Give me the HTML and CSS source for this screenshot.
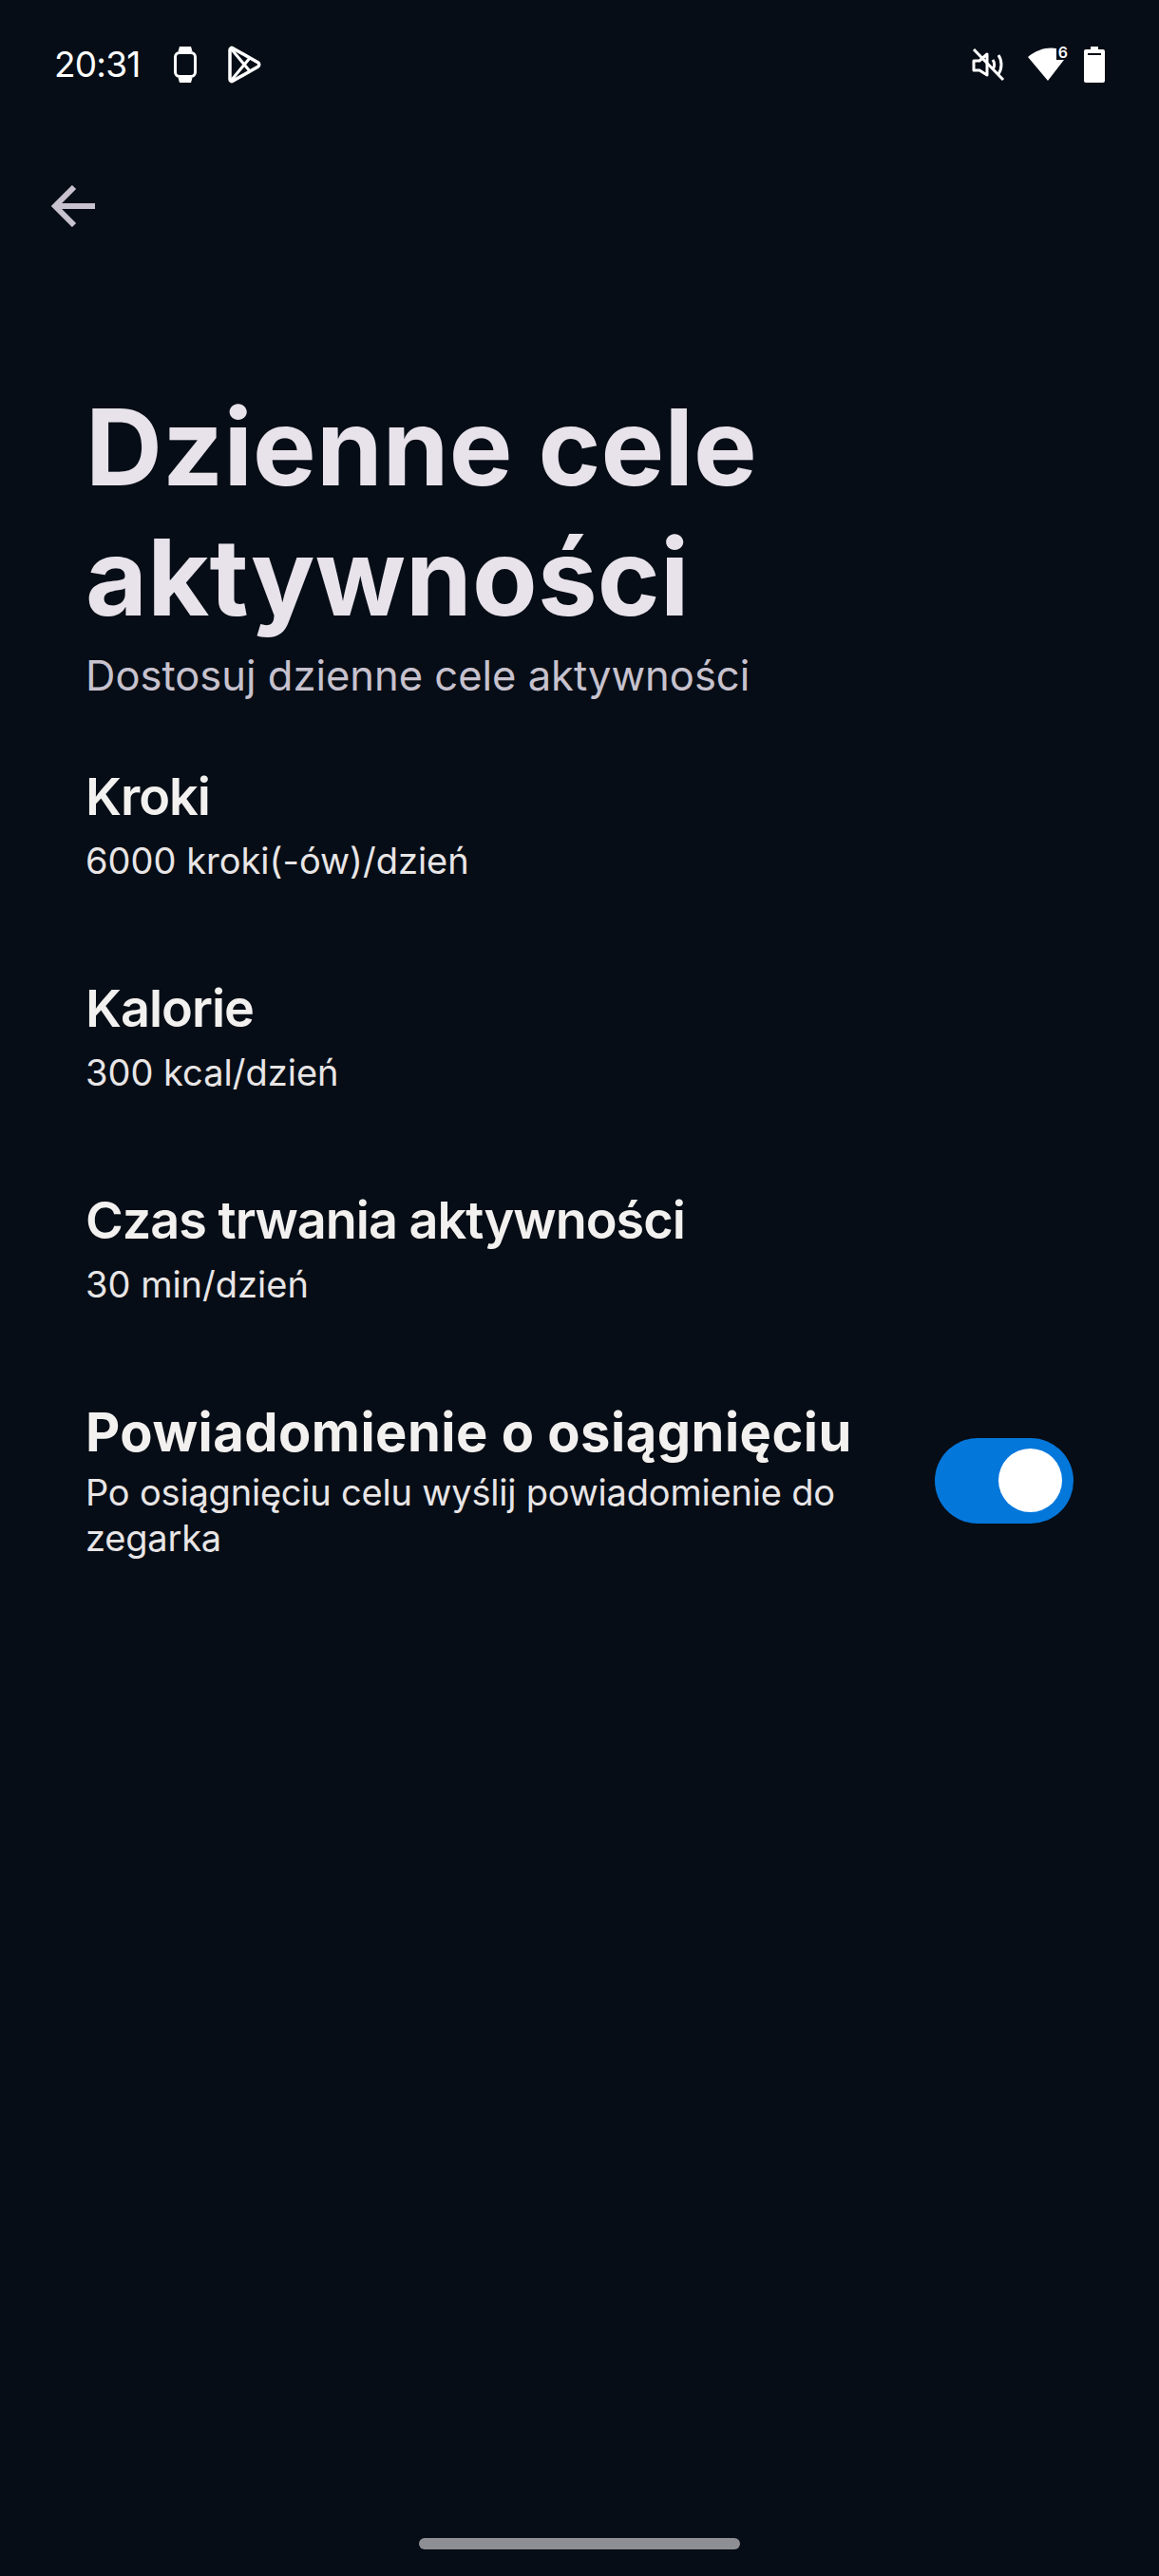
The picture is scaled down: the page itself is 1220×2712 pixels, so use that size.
FILE: index.html
```html
<!DOCTYPE html>
<html lang="pl">
<head>
    <meta charset="UTF-8">
    <meta name="viewport" content="width=device-width, initial-scale=1.0">
    <title>Dzienne cele aktywności</title>
    <link rel="stylesheet" href="styles.css">
</head>
<body>
    <div class="screen">
        <!-- Status bar -->
        <div class="status-bar">
            <div class="status-left">
                <span class="clock">20:31</span>
                <svg class="icon-watch" width="24" height="40" viewBox="0 0 24 40">
                    <path d="M6 1h12l1.500 5h-15z" fill="#fff"/>
                    <path d="M6 39h12l1.500-5h-15z" fill="#fff"/>
                    <rect x="1.500" y="7.500" width="21" height="25" rx="4.500" fill="none" stroke="#fff" stroke-width="3"/>
                </svg>
                <svg class="icon-play" width="36" height="40" viewBox="0 0 36 40">
                    <path d="M3 4.500C3 2.800 4.600 1.900 6 2.700L32.500 17.800C34.200 18.800 34.200 21.200 32.500 22.200L6 37.300C4.600 38.100 3 37.200 3 35.500Z" fill="none" stroke="#fff" stroke-width="3.500" stroke-linejoin="round"/>
                    <path d="M4 3L24 27M4 37L24 13" fill="none" stroke="#fff" stroke-width="3"/>
                </svg>
            </div>
            <div class="status-right">
                <svg class="icon-mute" width="38" height="34" viewBox="0 0 38 34">
                    <path d="M2 13h6l8-7v22l-8-5H2z" fill="none" stroke="#fff" stroke-width="3" stroke-linejoin="round"/>
                    <path d="M22 12c2 3 2 7 0 10M28 7c4 6 4 14 0 20" fill="none" stroke="#fff" stroke-width="3"/>
                    <path d="M2 1l31 32" fill="none" stroke="#fff" stroke-width="3"/>
                </svg>
                <div class="wifi-wrap">
                    <svg width="42" height="38" viewBox="0 0 42 38">
                        <path d="M0 11C9 3 21 0 30 2L30 14L38 14L21 36Z" fill="#fff"/>
                    </svg>
                    <span class="wifi-six">6</span>
                </div>
                <svg class="icon-battery" width="22" height="38" viewBox="0 0 22 38">
                    <path d="M7 0h8v3h5a2 2 0 0 1 2 2v31a2 2 0 0 1-2 2H2a2 2 0 0 1-2-2V5a2 2 0 0 1 2-2h5z" fill="#fff"/>
                    <rect x="4" y="7" width="14" height="2" fill="#060d16"/>
                </svg>
            </div>
        </div>

        <!-- Back -->
        <div class="toolbar">
            <svg width="46" height="44" viewBox="0 0 46 44">
                <path d="M24 2L4 22L24 42M4 22H46" fill="none" stroke="#c7c2ce" stroke-width="6"/>
            </svg>
        </div>

        <!-- Header -->
        <div class="header">
            <h1>Dzienne cele aktywności</h1>
            <p class="subtitle">Dostosuj dzienne cele aktywności</p>
        </div>

        <!-- Settings list -->
        <div class="item">
            <div class="item-title">Kroki</div>
            <div class="item-value">6000 kroki(-ów)/dzień</div>
        </div>
        <div class="item">
            <div class="item-title">Kalorie</div>
            <div class="item-value">300 kcal/dzień</div>
        </div>
        <div class="item">
            <div class="item-title">Czas trwania aktywności</div>
            <div class="item-value">30 min/dzień</div>
        </div>
        <div class="item item-switch">
            <div class="item-text">
                <div class="item-title item-title-bold">Powiadomienie o osiągnięciu</div>
                <div class="item-value">Po osiągnięciu celu wyślij powiadomienie do zegarka</div>
            </div>
            <div class="toggle"><span class="knob"></span></div>
        </div>

        <div class="home-bar"></div>
    </div>
</body>
</html>
```

FILE: styles.css
```css
/* General */
html, body {
    margin: 0;
    padding: 0;
    background-color: #060d16;
}

body {
    font-family: 'Inter', 'Noto Sans', sans-serif;
    color: #f3f1ef;
}

.screen {
    width: 1220px;
    height: 2712px;
    display: flex;
    flex-direction: column;
    box-sizing: border-box;
    overflow: hidden;
}

/* Status bar */
.status-bar {
    height: 48px;
    margin-top: 44px;
    padding: 0 57px;
    display: flex;
    justify-content: space-between;
    align-items: center;
    box-sizing: border-box;
}

.status-left, .status-right {
    display: flex;
    align-items: center;
}

.clock {
    width: 126px;
    font-size: 37px;
    line-height: 48px;
    color: #fff;
    letter-spacing: -0.8px;
}

.icon-play {
    margin-left: 32px;
}

.wifi-wrap {
    position: relative;
    height: 38px;
    margin-left: 21px;
}

.wifi-six {
    position: absolute;
    top: -3px;
    right: 0;
    font-size: 16px;
    line-height: 18px;
    font-weight: 600;
    color: #fff;
}

.icon-battery {
    margin-left: 17px;
}

/* Back arrow */
.toolbar {
    height: 44px;
    margin-top: 103px;
    padding-left: 54px;
}

/* Header */
.header {
    padding: 0 90px;
    margin-top: 163px;
}

h1 {
    margin: 0;
    width: 800px;
    font-size: 112px;
    line-height: 137px;
    font-weight: 700;
    letter-spacing: 0.2px;
    color: #e8e3eb;
}

.subtitle {
    margin: 10px 0 69px;
    font-size: 43.5px;
    line-height: 50px;
    color: #c7c2ce;
}

/* Settings rows */
.item {
    padding: 0 90px;
    height: 223px;
    box-sizing: border-box;
}

.item-title {
    font-size: 54px;
    line-height: 68px;
    font-weight: 600;
    letter-spacing: -1px;
    color: #f3f1ef;
}

.item-value {
    margin-top: 9px;
    font-size: 38px;
    line-height: 48px;
    color: #e8e5e6;
}

.item-switch {
    display: flex;
    justify-content: space-between;
    align-items: center;
    height: auto;
}

.item-text {
    width: 820px;
}

.item-title-bold {
    font-size: 56px;
    font-weight: 700;
    letter-spacing: 0.5px;
}

.item-switch .item-value {
    margin-top: 5px;
    letter-spacing: -0.2px;
}

/* Toggle */
.toggle {
    width: 146px;
    height: 90px;
    padding: 11px 12px;
    box-sizing: border-box;
    display: flex;
    justify-content: flex-end;
    background-color: #0477db;
    border-radius: 45px;
}

.knob {
    width: 67px;
    height: 67px;
    background-color: #fff;
    border-radius: 50%;
}

/* Home indicator */
.home-bar {
    width: 338px;
    height: 12px;
    margin: auto auto 28px;
    background-color: #8e8f94;
    border-radius: 6px;
}
```
